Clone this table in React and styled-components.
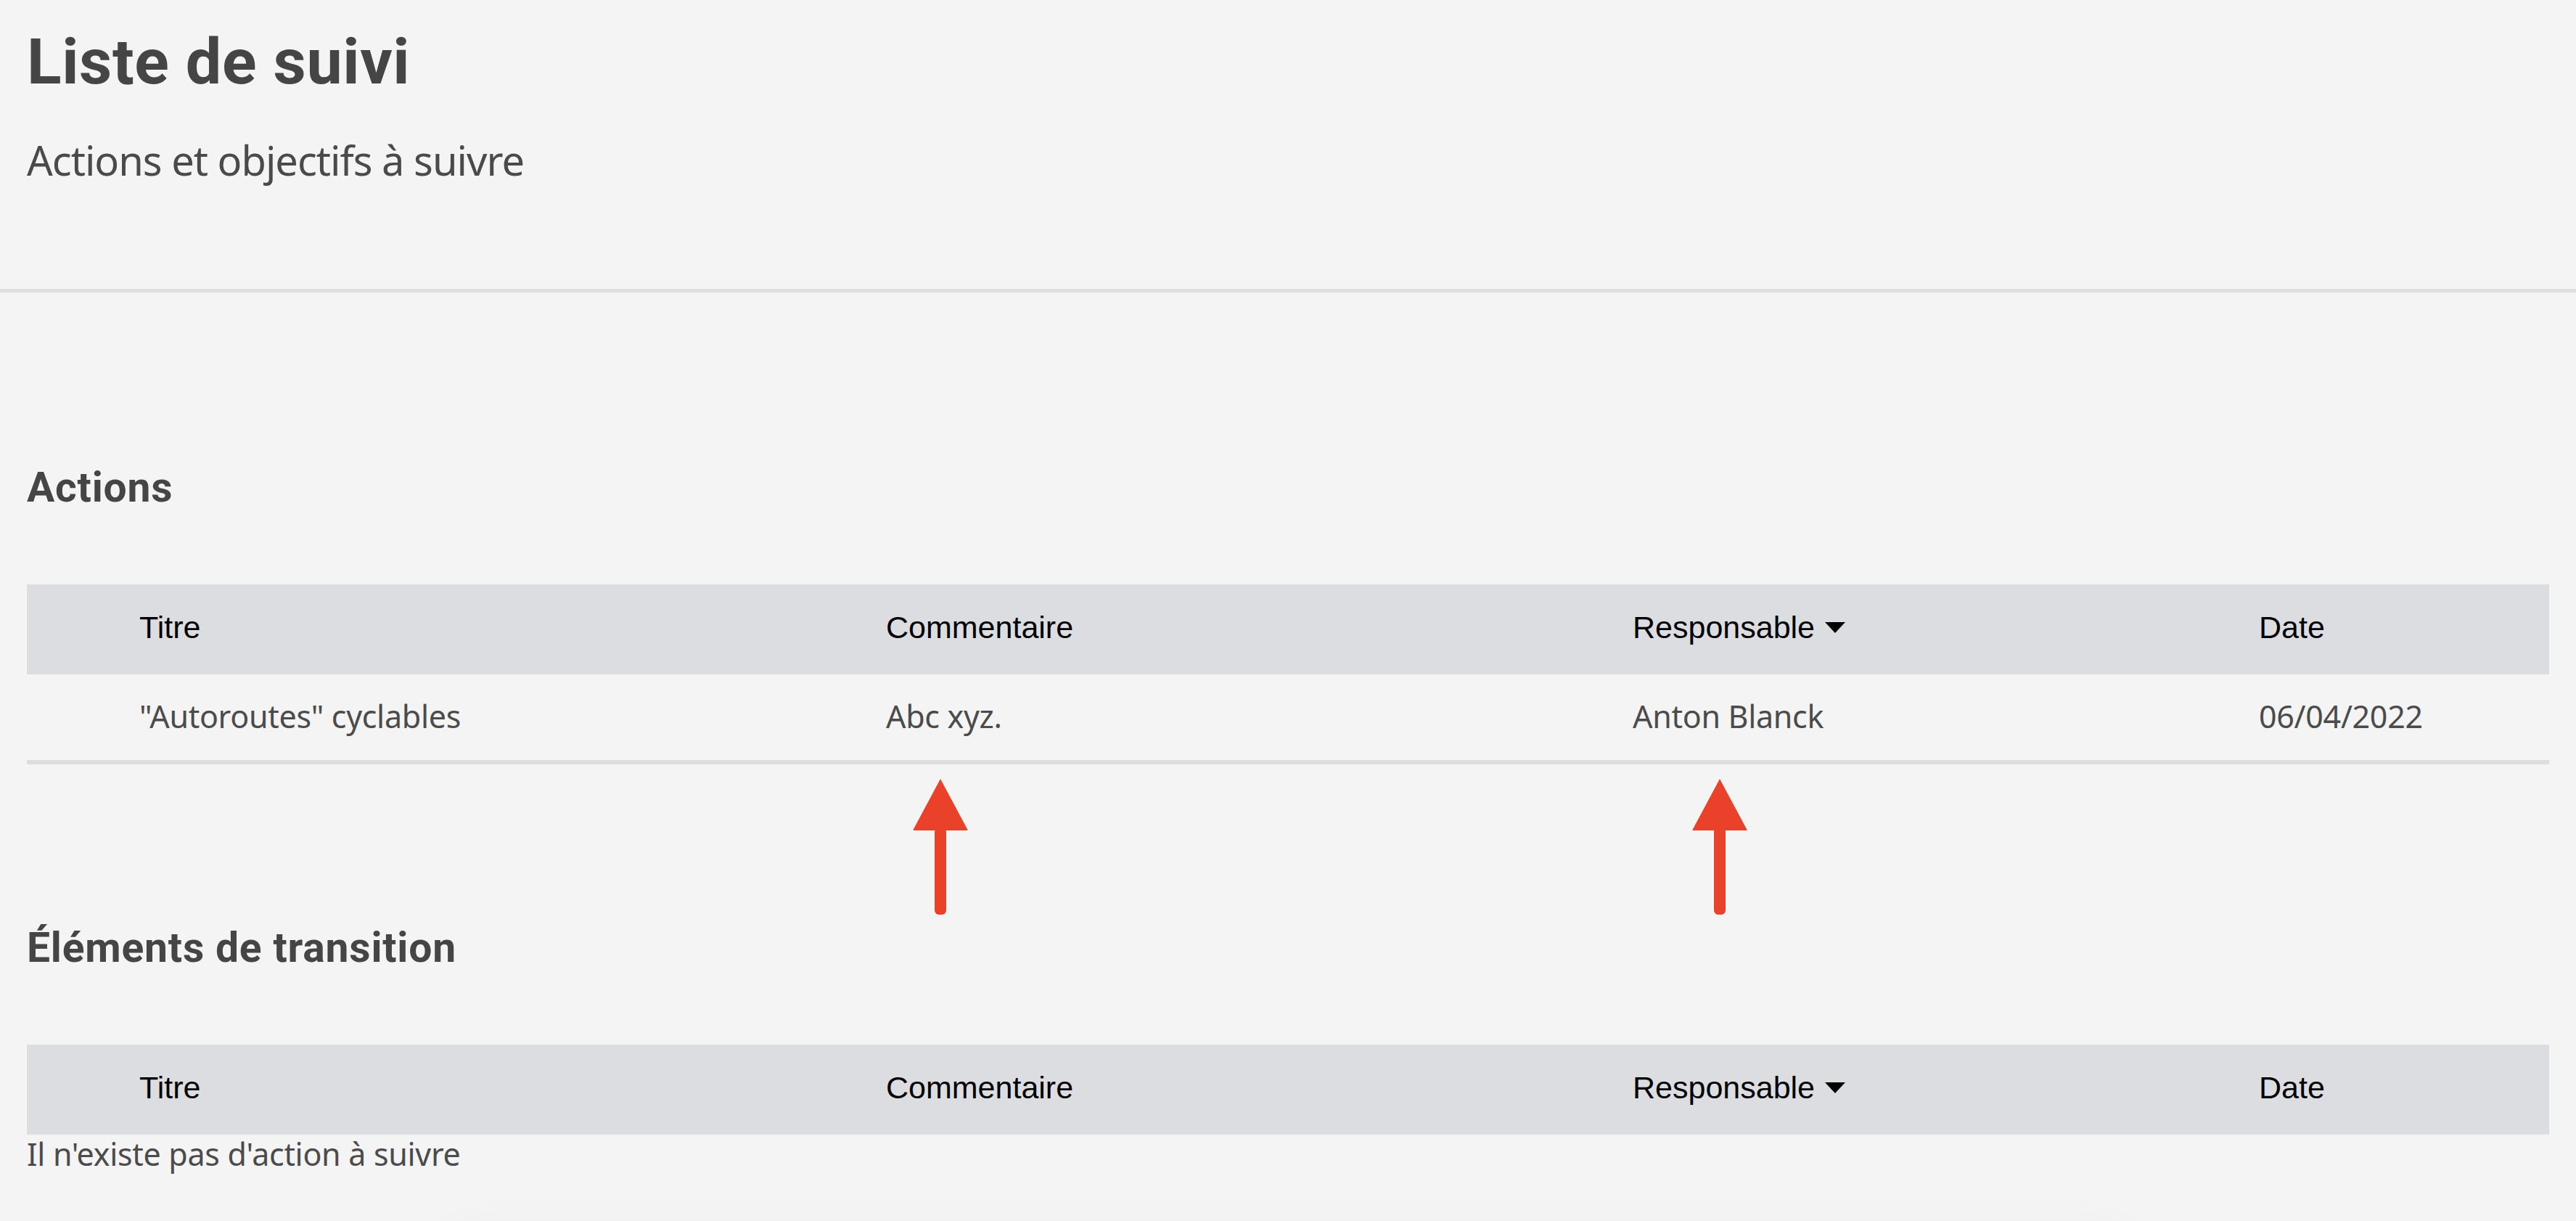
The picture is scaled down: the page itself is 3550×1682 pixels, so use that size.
import styled, { createGlobalStyle } from "styled-components";

const GlobalStyle = createGlobalStyle`
  html, body {
    margin: 0;
    background: #f4f4f4;
  }

  body {
    font-family: "Noto Sans", "Liberation Sans", sans-serif;
    color: #464646;
  }
`;

const columns = "1029px 1029px 863px 1fr";

const PageHeader = styled.header`
  padding: 35px 37px 143px;
  border-bottom: 5px solid #dfdfdc;
`;

const Title = styled.h1`
  margin: 0;
  font-family: Roboto, "Noto Sans", sans-serif;
  font-size: 88px;
  line-height: 100px;
  font-weight: 700;
  letter-spacing: 0.6px;
  color: #454545;
`;

const Subtitle = styled.p`
  margin: 50px 0 0;
  font-size: 56px;
  line-height: 70px;
  letter-spacing: -1px;
  color: #4a4a4a;
`;

const Main = styled.main`
  display: flex;
  flex-direction: column;
  gap: 218px;
  padding: 234px 37px 0;
`;

const Section = styled.section`
  display: flex;
  flex-direction: column;
`;

const SectionHeading = styled.h2`
  margin: 0 0 98px;
  font-family: Roboto, "Noto Sans", sans-serif;
  font-size: 57px;
  line-height: 70px;
  font-weight: 700;
  letter-spacing: 0.8px;
  color: #454545;
`;

const Table = styled.div`
  position: relative;
`;

const HeadRow = styled.div`
  display: grid;
  grid-template-columns: ${columns};
  align-items: center;
  height: 124px;
  padding: 0 0 6px 155px;
  box-sizing: border-box;
  background: #dcdde0;
  font-family: "Liberation Sans", Arial, sans-serif;
  font-size: 43px;
  color: #000;
`;

const HeadCell = styled.div`
  display: flex;
  align-items: center;
  gap: 14px;
`;

const Row = styled.div`
  display: grid;
  grid-template-columns: ${columns};
  align-items: center;
  height: 124px;
  padding: 0 0 3px 155px;
  box-sizing: border-box;
  border-bottom: 6px solid #dcdde0;
  font-size: 43px;
  letter-spacing: -0.3px;
  color: #4b4b4b;
`;

const Empty = styled.p`
  margin: 0;
  font-size: 43px;
  line-height: 53px;
  letter-spacing: -0.3px;
  color: #4b4b4b;
`;

const Arrow = styled.svg`
  position: absolute;
  top: calc(100% + 19px);
  left: ${(p) => p.$left}px;
  width: 78px;
  height: 190px;
`;

const Footer = styled.footer`
  width: 2300px;
  height: 200px;
  margin: 90px auto 0;
  background: #f4f4f4;
  box-shadow: 0 0 70px rgba(0, 0, 0, 0.06);
`;

const SortCaret = () => (
  <svg width="28" height="15" viewBox="0 0 28 15">
    <polygon points="0,0 28,0 14,15" fill="#000" />
  </svg>
);

const UpArrow = ({ left }) => (
  <Arrow $left={left} viewBox="0 0 78 190">
    <path
      d="M39 1 L76 70 Q78 72 74 72 L4 72 Q0 72 2 70 Z"
      fill="#e9412a"
    />
    <rect x="31" y="68" width="16" height="120" rx="6" fill="#e9412a" />
  </Arrow>
);

const TableHead = () => (
  <HeadRow>
    <HeadCell>Titre</HeadCell>
    <HeadCell>Commentaire</HeadCell>
    <HeadCell>
      Responsable
      <SortCaret />
    </HeadCell>
    <HeadCell>Date</HeadCell>
  </HeadRow>
);

const actions = [
  {
    titre: '"Autoroutes" cyclables',
    commentaire: "Abc xyz.",
    responsable: "Anton Blanck",
    date: "06/04/2022",
  },
];

const App = () => {
  return (
    <>
      <GlobalStyle />
      <PageHeader>
        <Title>Liste de suivi</Title>
        <Subtitle>Actions et objectifs à suivre</Subtitle>
      </PageHeader>
      <Main>
        <Section>
          <SectionHeading>Actions</SectionHeading>
          <Table>
            <TableHead />
            {actions.map((a) => (
              <Row key={a.titre}>
                <div>{a.titre}</div>
                <div>{a.commentaire}</div>
                <div>{a.responsable}</div>
                <div>{a.date}</div>
              </Row>
            ))}
            <UpArrow left={1220} />
            <UpArrow left={2294} />
          </Table>
        </Section>
        <Section>
          <SectionHeading>Éléments de transition</SectionHeading>
          <Table>
            <TableHead />
          </Table>
          <Empty>Il n'existe pas d'action à suivre</Empty>
        </Section>
      </Main>
      <Footer />
    </>
  );
};

export default App;
